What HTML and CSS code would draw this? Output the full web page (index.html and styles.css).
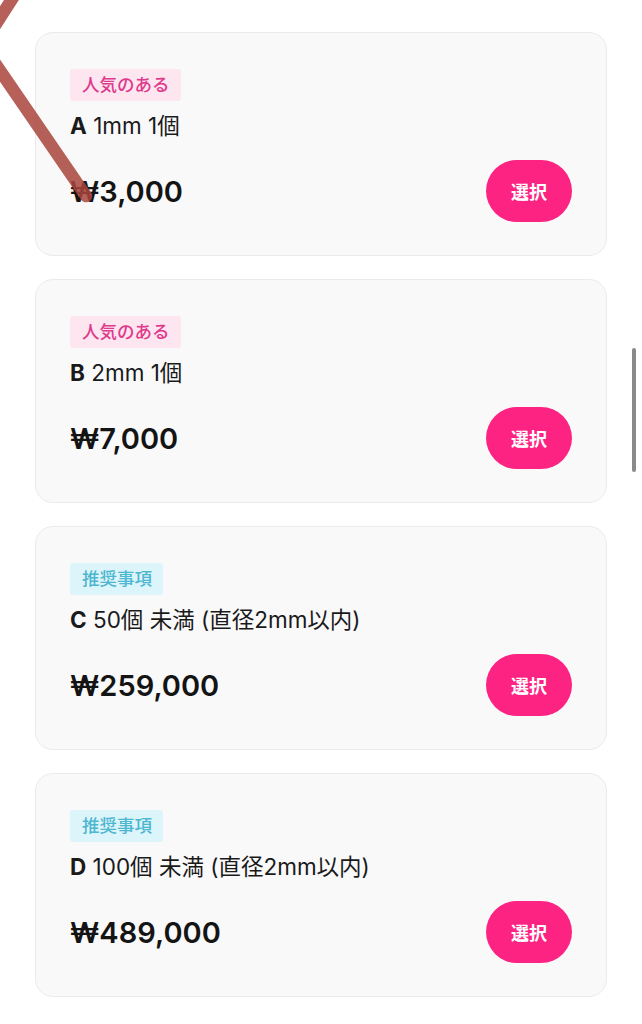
FILE: index.html
```html
<!DOCTYPE html>
<html lang="ja">
<head>
<meta charset="utf-8">
<title>Options</title>
<link rel="stylesheet" href="styles.css">
</head>
<body>
<main class="list">
  <section class="card">
    <span class="badge badge-pink">人気のある</span>
    <p class="title"><b>A</b> 1mm 1個</p>
    <div class="row">
      <span class="price">₩3,000</span>
      <button class="select">選択</button>
    </div>
  </section>
  <section class="card">
    <span class="badge badge-pink">人気のある</span>
    <p class="title"><b>B</b> 2mm 1個</p>
    <div class="row">
      <span class="price">₩7,000</span>
      <button class="select">選択</button>
    </div>
  </section>
  <section class="card">
    <span class="badge badge-blue">推奨事項</span>
    <p class="title"><b>C</b> 50個 未満 (直径2mm以内)</p>
    <div class="row">
      <span class="price">₩259,000</span>
      <button class="select">選択</button>
    </div>
  </section>
  <section class="card">
    <span class="badge badge-blue">推奨事項</span>
    <p class="title"><b>D</b> 100個 未満 (直径2mm以内)</p>
    <div class="row">
      <span class="price">₩489,000</span>
      <button class="select">選択</button>
    </div>
  </section>
</main>
<svg class="scribble" width="120" height="220" viewBox="0 0 120 220" aria-hidden="true">
  <line x1="14" y1="-4" x2="-6" y2="27" />
  <line x1="-10" y1="56" x2="86" y2="196" />
</svg>
<div class="scrollbar"></div>
</body>
</html>
```

FILE: styles.css
```css
html, body {
  margin: 0;
  padding: 0;
  background: #ffffff;
}

body {
  font-family: "Inter", "Noto Sans CJK JP", sans-serif;
  color: #151515;
  width: 642px;
  min-height: 1024px;
  position: relative;
  overflow: hidden;
}

.list {
  display: flex;
  flex-direction: column;
  gap: 23px;
  padding: 32px 35px 0;
}

.card {
  display: flex;
  flex-direction: column;
  align-items: flex-start;
  height: 224px;
  box-sizing: border-box;
  padding: 36px 34px 0 34px;
  background: #f9f9fa;
  border: 1px solid #ebebec;
  border-radius: 18px;
}

.badge {
  display: inline-flex;
  align-items: center;
  height: 32px;
  padding: 0 11px 0 12px;
  font-size: 17.5px;
  font-weight: 500;
  line-height: 1;
  border-radius: 3px;
}

.badge-pink {
  background: #fde6f0;
  color: #e03a8d;
}

.badge-blue {
  background: #dcf5fb;
  color: #4db6d0;
}

.title {
  margin: 11px 0 0;
  font-size: 22.5px;
  line-height: 28px;
  font-weight: 400;
  color: #1a1a1a;
}

.title b {
  font-weight: 700;
}

.row {
  align-self: stretch;
  display: flex;
  align-items: center;
  justify-content: space-between;
  margin-top: 20px;
}

.price {
  font-size: 29px;
  font-weight: 600;
  color: #141414;
}

.select {
  width: 86px;
  height: 62px;
  border: none;
  border-radius: 31px;
  background: #fd2382;
  color: #ffffff;
  font-family: "Noto Sans CJK JP", sans-serif;
  font-size: 18px;
  font-weight: 600;
  padding: 0;
}

.scribble {
  position: absolute;
  left: 0;
  top: 0;
  overflow: visible;
}

.scribble line {
  stroke: #a9443c;
  stroke-opacity: 0.85;
  stroke-width: 12.5;
  stroke-linecap: round;
}

.scrollbar {
  position: absolute;
  left: 632px;
  top: 348px;
  width: 4px;
  height: 124px;
  border-radius: 2px;
  background: #8a8a8a;
}
```
